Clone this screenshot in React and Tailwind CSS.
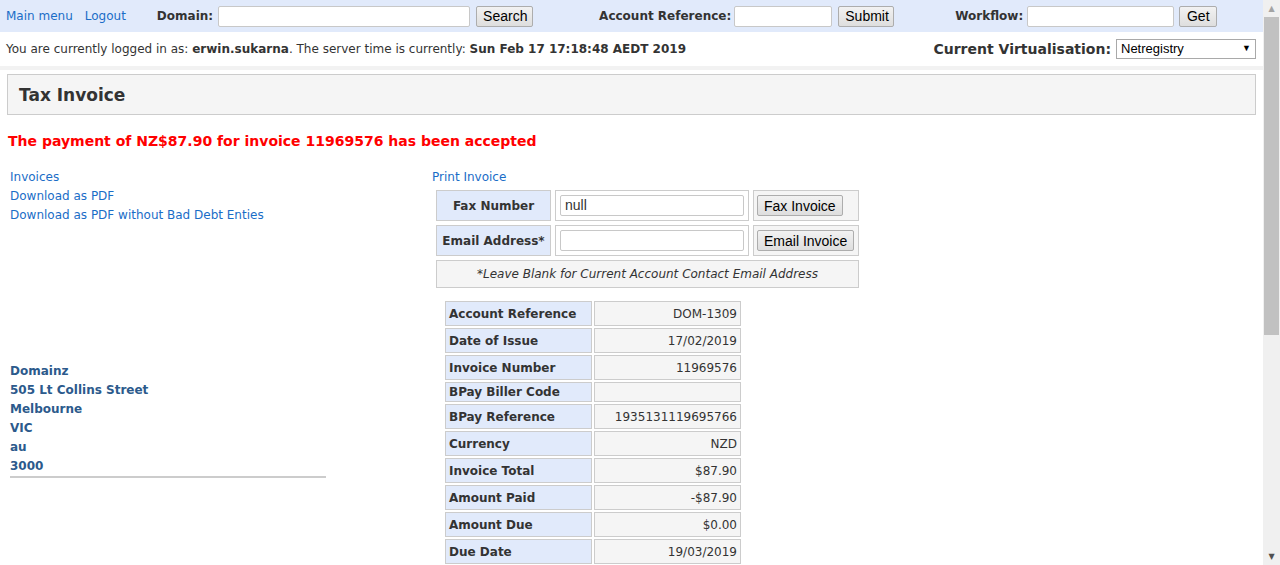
import React from "react";

const details = [
  ["Account Reference", "DOM-1309"],
  ["Date of Issue", "17/02/2019"],
  ["Invoice Number", "11969576"],
  ["BPay Biller Code", ""],
  ["BPay Reference", "1935131119695766"],
  ["Currency", "NZD"],
  ["Invoice Total", "$87.90"],
  ["Amount Paid", "-$87.90"],
  ["Amount Due", "$0.00"],
  ["Due Date", "19/03/2019"],
];

const btn =
  "h-[21px] px-[6px] border border-[#adadad] rounded-[2px] bg-gradient-to-b from-[#f2f2f2] to-[#dedede] text-[14px] text-black font-['Liberation_Sans',Arial,sans-serif] leading-none";
const input =
  "h-[21px] border border-[#c8c8c8] rounded-[2px] bg-white px-[4px] text-[14px] font-['Liberation_Sans',Arial,sans-serif] outline-none";

export default function App() {
  return (
    <div className="flex h-[565px] overflow-hidden bg-white font-['DejaVu_Sans',Verdana,sans-serif] text-[12px] text-[#333]">
      <div className="flex-1 min-w-0">
        {/* top bar */}
        <div className="h-[32px] bg-[#e1eafb] flex items-center pl-[6px]">
          <a className="text-[#1a6dc7]">Main menu</a>
          <a className="text-[#1a6dc7] ml-[12px]">Logout</a>
          <span className="font-bold ml-[31px]">Domain:</span>
          <input className={`${input} w-[252px] ml-[5px]`} />
          <button className={`${btn} ml-[6px] w-[57px]`}>Search</button>
          <span className="font-bold ml-[66px]">Account Reference:</span>
          <input className={`${input} w-[98px] ml-[3px]`} />
          <button className={`${btn} ml-[6px] w-[56px]`}>Submit</button>
          <span className="font-bold ml-[61px]">Workflow:</span>
          <input className={`${input} w-[147px] ml-[4px]`} />
          <button className={`${btn} ml-[5px] w-[38px]`}>Get</button>
        </div>

        {/* login row */}
        <div className="h-[38px] flex items-center pl-[6px] pr-[7px] border-b-[4px] border-[#f2f2f2]">
          <span>
            You are currently logged in as: <b>erwin.sukarna</b>. The server time is currently:{" "}
            <b>Sun Feb 17 17:18:48 AEDT 2019</b>
          </span>
          <span className="ml-auto font-bold text-[14px] mr-[5px]">Current Virtualisation:</span>
          <div className="w-[140px] h-[20px] border border-[#a9a9a9] flex items-center px-[4px] font-['Liberation_Sans',Arial,sans-serif] text-[13px] text-black">
            <span>Netregistry</span>
            <span className="ml-auto text-[9px]">▼</span>
          </div>
        </div>

        {/* title */}
        <div className="mx-[7px] mt-[4px] h-[41px] bg-[#f5f5f5] border border-[#ccc] flex items-center px-[11px] pt-[2px]">
          <h1 className="text-[17px] font-bold text-[#333]">Tax Invoice</h1>
        </div>

        <p className="mt-[16px] ml-[8px] text-[14px] font-bold text-[#f00]">
          The payment of NZ$87.90 for invoice 11969576 has been accepted
        </p>

        <div className="flex mt-[16px]">
          {/* left column */}
          <div className="w-[316px] ml-[10px] flex flex-col">
            <div className="flex flex-col leading-[19px] text-[#1a6dc7]">
              <a>Invoices</a>
              <a>Download as PDF</a>
              <a>Download as PDF without Bad Debt Enties</a>
            </div>
            <div className="mt-[137px] flex flex-col leading-[19px] font-bold text-[#2c5a8c]">
              <span>Domainz</span>
              <span>505 Lt Collins Street</span>
              <span>Melbourne</span>
              <span>VIC</span>
              <span>au</span>
              <span>3000</span>
            </div>
            <div className="h-[2px] bg-[#ccc]" />
          </div>

          {/* right column */}
          <div className="ml-[106px] flex flex-col items-start">
            <a className="text-[#1a6dc7] leading-[19px]">Print Invoice</a>
            <table className="border-separate border-spacing-[4px] mt-[-1px]">
              <tbody>
                <tr className="h-[31px]">
                  <td className="w-[115px] bg-[#e1eafb] border border-[#ccc] text-center font-bold">Fax Number</td>
                  <td className="w-[194px] border border-[#ccc] px-[4px]">
                    <input className={`${input} w-full`} defaultValue="null" />
                  </td>
                  <td className="w-[106px] border border-[#ccc] bg-[#f5f5f5] px-[3px]">
                    <button className={btn}>Fax Invoice</button>
                  </td>
                </tr>
                <tr className="h-[31px]">
                  <td className="bg-[#e1eafb] border border-[#ccc] text-center font-bold">Email Address*</td>
                  <td className="border border-[#ccc] px-[4px]">
                    <input className={`${input} w-full`} />
                  </td>
                  <td className="border border-[#ccc] bg-[#f5f5f5] px-[3px]">
                    <button className={btn}>Email Invoice</button>
                  </td>
                </tr>
                <tr className="h-[28px]">
                  <td colSpan={3} className="bg-[#f5f5f5] border border-[#ccc] text-center italic">
                    *Leave Blank for Current Account Contact Email Address
                  </td>
                </tr>
              </tbody>
            </table>

            <table className="border-separate border-spacing-[2px] ml-[11px] mt-[7px]">
              <tbody>
                {details.map(([k, v]) => (
                  <tr key={k} className={v ? "h-[25px]" : "h-[20px]"}>
                    <td className="w-[147px] bg-[#e1eafb] border border-[#ccc] px-[3px] font-bold">{k}</td>
                    <td className="w-[147px] bg-[#f5f5f5] border border-[#ccc] px-[3px] text-right">{v}</td>
                  </tr>
                ))}
              </tbody>
            </table>
          </div>
        </div>
      </div>

      {/* scrollbar */}
      <div className="w-[17px] bg-[#f0f0f0] flex flex-col items-center">
        <span className="text-[8px] text-[#a3a3a3] leading-[17px]">▲</span>
        <div className="w-[15px] h-[318px] bg-[#c1c1c1]" />
        <span className="mt-auto text-[8px] text-[#505050] leading-[17px]">▼</span>
      </div>
    </div>
  );
}
